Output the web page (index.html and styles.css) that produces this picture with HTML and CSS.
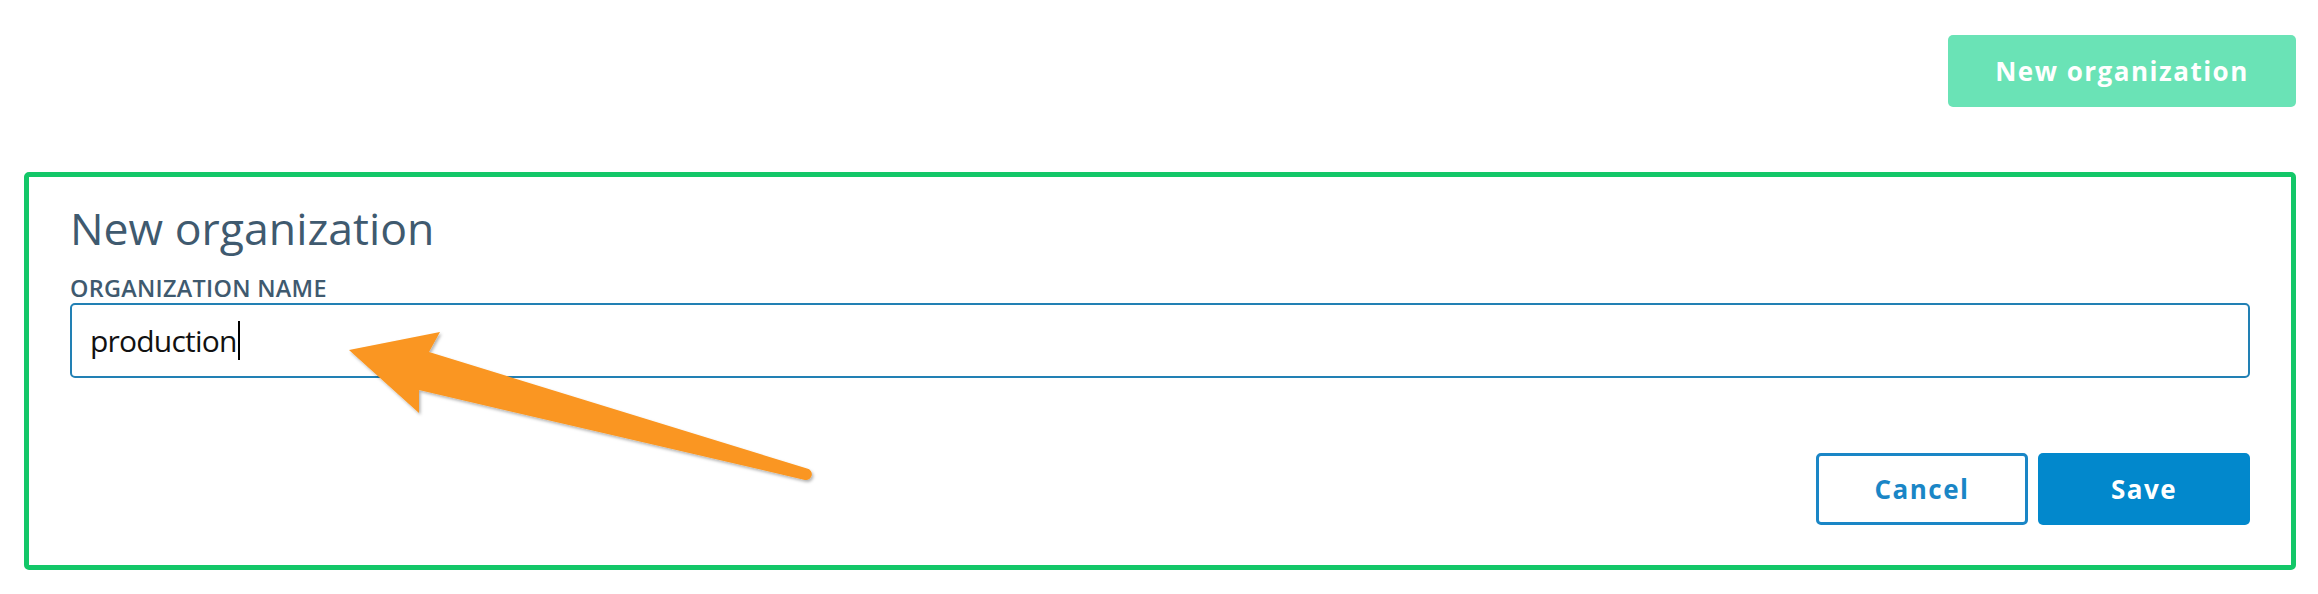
FILE: index.html
```html
<!DOCTYPE html>
<html lang="en">
<head>
<meta charset="utf-8">
<title>New organization</title>
<link rel="stylesheet" href="styles.css">
</head>
<body>
<div class="page">
  <div class="toolbar">
    <button class="btn btn-new" type="button">New organization</button>
  </div>
  <section class="panel">
    <h2 class="panel-title">New organization</h2>
    <label class="field-label">ORGANIZATION NAME</label>
    <div class="field-input"><span class="field-text">production</span><span class="caret"></span></div>
    <div class="actions">
      <button class="btn btn-cancel" type="button">Cancel</button>
      <button class="btn btn-save" type="button">Save</button>
    </div>
  </section>
  <svg class="annotation" width="2318" height="594" viewBox="0 0 2318 594" xmlns="http://www.w3.org/2000/svg">
    <defs>
      <filter id="sh" x="-10%" y="-10%" width="130%" height="140%">
        <feDropShadow dx="1.5" dy="2" stdDeviation="1.5" flood-color="#000" flood-opacity="0.3"/>
      </filter>
    </defs>
    <path d="M349 350 L440 332 L429 352 L807 468.5 A5.6 5.6 0 0 1 805 480 L419 390 L419 413 Z" fill="#fa9620" filter="url(#sh)"/>
  </svg>
</div>
</body>
</html>
```

FILE: styles.css
```css
html, body {
  margin: 0;
  padding: 0;
  background: #ffffff;
}

.page {
  position: relative;
  width: 2318px;
  height: 594px;
  font-family: "Open Sans", "Noto Sans", sans-serif;
}

.toolbar {
  display: flex;
  justify-content: flex-end;
  padding: 35px 22px 0 0;
  height: 72px;
}

.btn {
  font-family: "Open Sans", "Noto Sans", sans-serif;
  font-weight: 700;
  font-size: 26px;
  letter-spacing: 1.5px;
  border-radius: 5px;
  cursor: pointer;
  box-sizing: border-box;
  display: flex;
  align-items: center;
  justify-content: center;
  padding: 0;
}

.btn-new {
  width: 348px;
  height: 72px;
  background: #6ae3b6;
  color: #ffffff;
  border: none;
}

.panel {
  margin: 65px 22px 0 24px;
  border: 5px solid #13c768;
  border-radius: 5px;
  padding: 25px 41px 40px 41px;
  display: flex;
  flex-direction: column;
}

.panel-title {
  margin: 0;
  font-size: 44.6px;
  line-height: 52px;
  font-weight: 400;
  color: #3f5a6f;
}

.field-label {
  margin-top: 20px;
  font-size: 23.4px;
  line-height: 29px;
  font-weight: 600;
  color: #3f5a6f;
  letter-spacing: 0.3px;
}

.field-input {
  height: 75px;
  box-sizing: border-box;
  border: 2px solid #2280b4;
  border-radius: 5px;
  padding: 0 18px;
  display: flex;
  align-items: center;
}

.field-text {
  font-size: 30px;
  letter-spacing: -0.8px;
  color: #111111;
  line-height: 40px;
}

.caret {
  display: inline-block;
  width: 2px;
  height: 39px;
  background: #000000;
  margin-left: 1px;
}

.actions {
  display: flex;
  justify-content: flex-end;
  gap: 10px;
  margin-top: 75px;
}

.btn-cancel {
  width: 212px;
  height: 72px;
  background: #ffffff;
  color: #1a86c6;
  border: 3px solid #1a86c6;
}

.btn-save {
  width: 212px;
  height: 72px;
  background: #0288cc;
  color: #ffffff;
  border: none;
}

.annotation {
  position: absolute;
  left: 0;
  top: 0;
  pointer-events: none;
}
```
